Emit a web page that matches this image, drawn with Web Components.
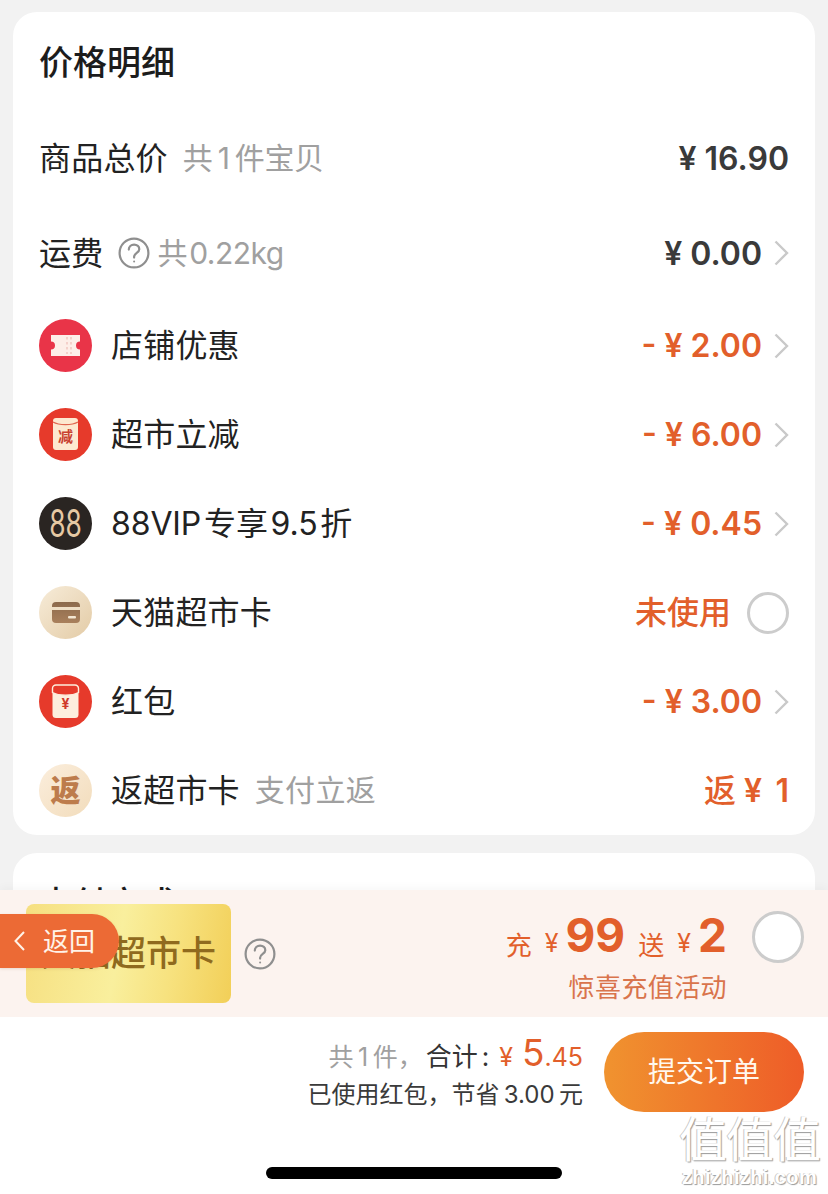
<!DOCTYPE html>
<html lang="zh">
<head>
<meta charset="utf-8">
<title>价格明细</title>
<style>
  html, body { margin: 0; padding: 0; }
  body {
    width: 828px;
    height: 1194px;
    overflow: hidden;
    background: #f2f2f2;
    font-family: Inter, "Noto Sans CJK SC", sans-serif;
    color: #222;
  }
</style>
</head>
<body>
<order-page>
  <detail-card slot="main" heading="价格明细">
    <price-row height="93">
      商品总价
      <span slot="note" style="letter-spacing:-.3px">共&#8201;1&#8201;件宝贝</span>
      <span slot="amount">¥ 16.90</span>
    </price-row>
    <price-row height="96" chevron help>
      运费
      <span slot="note" style="letter-spacing:-.5px">共&#8202;0.22kg</span>
      <span slot="amount">¥ 0.00</span>
    </price-row>
    <price-row chevron tone="hot">
      <order-icon slot="icon" kind="ticket"></order-icon>
      店铺优惠
      <span slot="amount">- ¥ 2.00</span>
    </price-row>
    <price-row chevron tone="hot">
      <order-icon slot="icon" kind="cut"></order-icon>
      超市立减
      <span slot="amount">- ¥ 6.00</span>
    </price-row>
    <price-row chevron tone="hot" tight>
      <order-icon slot="icon" kind="vip"></order-icon>
      88VIP&#8202;专享&#8202;9.5&#8202;折
      <span slot="amount">- ¥ 0.45</span>
    </price-row>
    <price-row tone="hot" radio>
      <order-icon slot="icon" kind="card"></order-icon>
      天猫超市卡
      <span slot="amount" class="plain">未使用</span>
    </price-row>
    <price-row chevron tone="hot">
      <order-icon slot="icon" kind="packet"></order-icon>
      红包
      <span slot="amount">- ¥ 3.00</span>
    </price-row>
    <price-row tone="hot">
      <order-icon slot="icon" kind="back"></order-icon>
      返超市卡
      <span slot="note">支付立返</span>
      <span slot="amount" class="plain gap">返</span>
      <span slot="amount">¥&nbsp;&#8201;1</span>
    </price-row>
  </detail-card>
  <detail-card slot="main" heading="支付方式"></detail-card>
  <promo-bar slot="promo"></promo-bar>
  <submit-bar slot="foot"></submit-bar>
  <back-tab slot="over"></back-tab>
</order-page>

<script>
const helpIcon = size => `
  <svg width="${size}" height="${size}" viewBox="0 0 32 32" fill="none" stroke="#8f8f8f" stroke-width="2.2" stroke-linecap="round">
    <circle cx="16" cy="16" r="14.4"/>
    <path d="M10.8 12.6c0-3 2.3-5 5.3-5s5.2 1.9 5.2 4.6c0 3.6-5.2 3.9-5.2 7.6v.8"/>
    <circle cx="16.1" cy="24.4" r="1" fill="#8f8f8f" stroke="none"/>
  </svg>`;

class OrderPage extends HTMLElement {
  constructor() {
    super();
    this.attachShadow({ mode: 'open' }).innerHTML = `
      <style>
        :host { display: flex; flex-direction: column; position: relative; width: 828px; height: 1194px; overflow: hidden; }
        .main { height: 890px; flex: none; overflow: hidden; padding: 12px 13px 0; box-sizing: border-box; display: flex; flex-direction: column; gap: 18px; }
        .over { position: absolute; left: 0; top: 914px; }
        .mark { position: absolute; right: 8px; top: 1110px; text-align: center; color: #fff; line-height: 1; text-shadow: 1px 1px 1px #9a9a9a, -1px 0 0 #c8c8c8; }
        .mark b { display: block; font: 400 48px/52px "Noto Sans CJK SC", sans-serif; letter-spacing: -1px; }
        .mark i { display: block; font: 700 20px/22px "Liberation Sans", sans-serif; letter-spacing: .4px; margin-top: 4px; }
      </style>
      <div class="main"><slot name="main"></slot></div>
      <slot name="promo"></slot>
      <slot name="foot"></slot>
      <div class="over"><slot name="over"></slot></div>
      <div class="mark"><b>值值值</b><i>zhizhizhi.com</i></div>
    `;
  }
}

class DetailCard extends HTMLElement {
  constructor() {
    super();
    this.attachShadow({ mode: 'open' }).innerHTML = `
      <style>
        :host { display: block; flex: none; background: #fff; border-radius: 24px; overflow: hidden; }
        h2 { margin: 0; height: 100px; box-sizing: border-box; padding: 0 26px 4px; display: flex; align-items: center; font-size: 34px; font-weight: 500; color: #1c1c1c; }
      </style>
      <h2>${this.getAttribute('heading')}</h2>
      <slot></slot>
    `;
  }
}

class PriceRow extends HTMLElement {
  constructor() {
    super();
    const h = this.getAttribute('height') || 89;
    const chevron = this.hasAttribute('chevron')
      ? `<svg class="chev" width="15" height="26" viewBox="0 0 15 26" fill="none" stroke="#c9c9c9" stroke-width="2.4"><path d="M1.5 1.5 13 13 1.5 24.5"/></svg>` : '';
    const radio = this.hasAttribute('radio') ? `<span class="radio"></span>` : '';
    const help = this.hasAttribute('help') ? `<span class="help">${helpIcon(32)}</span>` : '';
    this.attachShadow({ mode: 'open' }).innerHTML = `
      <style>
        :host { display: flex; align-items: center; height: ${h}px; padding: 0 26px 0 26px; font-size: 32px; color: #222; white-space: nowrap; }
        .icon { display: flex; }
        ::slotted([slot=icon]) { margin-right: 19px; }
        .label { margin-bottom: 5px; letter-spacing: ${this.hasAttribute('tight') ? '-.1px' : '.2px'}; }
        .note { font-size: 30px; letter-spacing: .3px; color: #a0a0a0; margin: 0 0 5px 15px; }
        .help { display: flex; margin-left: 15px; }
        .help + .note { margin-left: 7px; }
        .amount { margin-left: auto; display: flex; align-items: center; font-weight: 600; color: ${this.getAttribute('tone') === 'hot' ? '#e25f2b' : '#3a3a3a'}; }
        ::slotted(.plain) { font-weight: 500; margin-bottom: 5px; }
        ::slotted(.gap) { margin-right: 8px; }
        .chev { margin-left: 12px; flex: none; }
        .radio { width: 42px; height: 42px; box-sizing: border-box; margin-left: 16px; border: 3px solid #ccc; border-radius: 50%; flex: none; }
      </style>
      <span class="icon"><slot name="icon"></slot></span>
      <span class="label"><slot></slot></span>
      ${help}
      <span class="note"><slot name="note"></slot></span>
      <span class="amount"><slot name="amount"></slot></span>
      ${chevron}${radio}
    `;
  }
}

const icons = {
  ticket: `<circle cx="26.5" cy="26.5" r="26.5" fill="#e93448"/>
    <path d="M12 16h29v6.5a4 4 0 0 0 0 8V37H12v-6.5a4 4 0 0 0 0-8z" fill="#fdeee8"/>
    <path d="M28 18v17M32 18v17" stroke="#f2c9c2" stroke-width="1.6" stroke-dasharray="2.5 2.5"/>`,
  cut: `<circle cx="26.5" cy="26.5" r="26.5" fill="#e63a2b"/>
    <rect x="14" y="10" width="25" height="32" rx="3" fill="#fde9d0"/>
    <path d="M14 14c6 3.500 19 3.500 25 0" fill="none" stroke="#e0664f" stroke-width="1.2"/>
    <text x="26.5" y="34" text-anchor="middle" font-size="15" font-weight="700" fill="#c8402f" font-family="Noto Sans CJK SC">减</text>`,
  vip: `<circle cx="26.5" cy="26.5" r="26.5" fill="#2a2522"/>
    <text transform="translate(26.5 40) scale(.88 1.27)" text-anchor="middle" font-size="30" fill="#e6c9a4" font-family="Inter">88</text>`,
  card: `<defs><linearGradient id="g1" x1="0" y1="0" x2="1" y2="1"><stop offset="0" stop-color="#f7ecd9"/><stop offset="1" stop-color="#e3cba6"/></linearGradient>
      <linearGradient id="g2" x1="0" y1="0" x2="0" y2="1"><stop offset="0" stop-color="#8c6a4c"/><stop offset="1" stop-color="#a9805c"/></linearGradient></defs>
    <circle cx="26.5" cy="26.5" r="26.5" fill="url(#g1)"/>
    <rect x="13" y="16" width="28" height="21" rx="4" fill="url(#g2)"/>
    <rect x="13" y="21" width="28" height="3" fill="#efdfc6"/>
    <rect x="29" y="30" width="8" height="2.4" rx="1" fill="#f3e6d2"/>`,
  packet: `<circle cx="26.5" cy="26.5" r="26.5" fill="#e63a2b"/>
    <rect x="13.5" y="10" width="26" height="33" rx="3.5" fill="#fdeedd"/>
    <path d="M13.5 13.5a3.5 3.5 0 0 1 3.5-3.500h19a3.500 3.500 0 0 1 3.500 3.500v4c-6 3.500-20 3.500-26 0z" fill="#e63a2b" stroke="#fdeedd" stroke-width="1.4"/>
    <text x="26.5" y="34" text-anchor="middle" font-size="14" font-weight="700" fill="#d0392a" font-family="Inter">¥</text>`,
  back: `<defs><linearGradient id="g3" x1="0" y1="0" x2="1" y2="1"><stop offset="0" stop-color="#fbeedd"/><stop offset="1" stop-color="#f2dcbb"/></linearGradient></defs>
    <circle cx="26.5" cy="26.5" r="26.5" fill="url(#g3)"/>
    <text x="26.5" y="37" text-anchor="middle" font-size="30" font-weight="900" fill="#bd7c4c" font-family="Noto Sans CJK SC">返</text>`
};

class OrderIcon extends HTMLElement {
  constructor() {
    super();
    this.attachShadow({ mode: 'open' }).innerHTML = `
      <style>:host { display: block; width: 53px; height: 53px; flex: none; } svg { display: block; }</style>
      <svg width="53" height="53" viewBox="0 0 53 53">${icons[this.getAttribute('kind')]}</svg>
    `;
  }
}

class PromoBar extends HTMLElement {
  constructor() {
    super();
    this.attachShadow({ mode: 'open' }).innerHTML = `
      <style>
        :host { display: flex; align-items: center; height: 127px; flex: none; box-sizing: border-box; padding: 0 24px 0 26px; background: #fcf3ef; box-shadow: 0 -3px 8px rgba(0,0,0,.03); }
        .gold { width: 205px; height: 99px; border-radius: 8px; display: flex; align-items: center; justify-content: flex-end; box-sizing: border-box; padding: 0 15px 6px 0;
          background: linear-gradient(100deg, #f6df80 0%, #f9ef9d 45%, #f7e27f 70%, #f2cf58 100%);
          font: 500 35px "Noto Sans CJK SC", sans-serif; color: #8f6a1e; white-space: nowrap; }
        .help { display: flex; margin-left: 13px; }
        .offer { margin-left: auto; display: flex; flex-direction: column; align-items: flex-end; color: #e25f2b; margin-top: 5px; }
        .line { display: flex; align-items: baseline; height: 66px; font-size: 25px; white-space: nowrap; }
        .line b { font-size: 46px; font-weight: 700; }
        .line span { margin-left: 13px; font-size: 26px; transform: translateY(3px); }
        .line i { font-style: normal; margin-left: 13px; margin-right: 7px; }
        .line span:first-child { margin-left: 0; }
        .sub { font-size: 26px; letter-spacing: .4px; color: #d9744c; height: 36px; line-height: 36px; margin-top: -3px; }
        .radio { width: 52px; height: 52px; margin: -34px 0 0 25px; box-sizing: border-box; border: 3px solid #ccc; border-radius: 50%; background: #fff; flex: none; }
      </style>
      <div class="gold">天猫超市卡</div>
      <span class="help">${helpIcon(32)}</span>
      <div class="offer">
        <div class="line"><span>充</span><i>¥</i><b>99</b><span>送</span><i>¥</i><b>2</b></div>
        <div class="sub">惊喜充值活动</div>
      </div>
      <span class="radio"></span>
    `;
  }
}

class SubmitBar extends HTMLElement {
  constructor() {
    super();
    this.attachShadow({ mode: 'open' }).innerHTML = `
      <style>
        :host { display: flex; flex-direction: column; height: 177px; flex: none; background: #fff; box-sizing: border-box; padding: 15px 24px 0; }
        .top { display: flex; align-items: center; justify-content: flex-end; }
        .sum { text-align: right; margin-right: 21px; white-space: nowrap; }
        .total { display: flex; justify-content: flex-end; align-items: baseline; font-size: 26px; height: 46px; margin: -2px 0 2px; color: #333; }
        .total > span:first-child { font-size: 25px; margin-right: 3px; }
        .muted { color: #a0a0a0; }
        .hot { color: #e25f2b; }
        .big { font-size: 37px; margin-left: 9px; }
        .yen { margin-left: 10px; font-size: 25px; }
        .dec { font-size: 25px; }
        .colon { margin-left: 4px; }
        .saved { font-size: 24px; color: #3a3a3a; line-height: 34px; }
        button { width: 200px; height: 80px; padding: 0 0 4px; border: 0; border-radius: 40px; color: #fff8ee; font: 400 28px "Noto Sans CJK SC", sans-serif;
          background: linear-gradient(90deg, #f0932f, #ee5c28); }
        .home { width: 296px; height: 12px; border-radius: 6px; background: #000; align-self: center; margin-top: 55px; }
      </style>
      <div class="top">
        <div class="sum">
          <div class="total"><span class="muted">共&#8201;1&#8201;件，</span><span>合计</span><span class="colon">:</span><span class="hot yen">¥</span><span class="hot big">5</span><span class="hot dec">.45</span></div>
          <div class="saved">已使用红包，节省&#8201;3.00&#8201;元</div>
        </div>
        <button>提交订单</button>
      </div>
      <div class="home"></div>
    `;
  }
}

class BackTab extends HTMLElement {
  constructor() {
    super();
    this.attachShadow({ mode: 'open' }).innerHTML = `
      <style>
        :host { display: flex; align-items: center; width: 119px; height: 54px; box-sizing: border-box; padding: 0 0 0 14px; background: #ec6a35; border-radius: 0 27px 27px 0; color: #fff3e8; font: 400 26px "Noto Sans CJK SC", sans-serif; box-shadow: 0 1px 3px rgba(120,60,20,.15); }
        span { margin-bottom: 4px; }
        svg { margin-right: 18px; flex: none; }
      </style>
      <svg width="11" height="20" viewBox="0 0 11 20" fill="none" stroke="#fff3e8" stroke-width="2"><path d="M10 1 1.500 10 10 19"/></svg>
      <span>返回</span>
    `;
  }
}

customElements.define('order-page', OrderPage);
customElements.define('detail-card', DetailCard);
customElements.define('price-row', PriceRow);
customElements.define('order-icon', OrderIcon);
customElements.define('promo-bar', PromoBar);
customElements.define('submit-bar', SubmitBar);
customElements.define('back-tab', BackTab);
</script>
</body>
</html>
